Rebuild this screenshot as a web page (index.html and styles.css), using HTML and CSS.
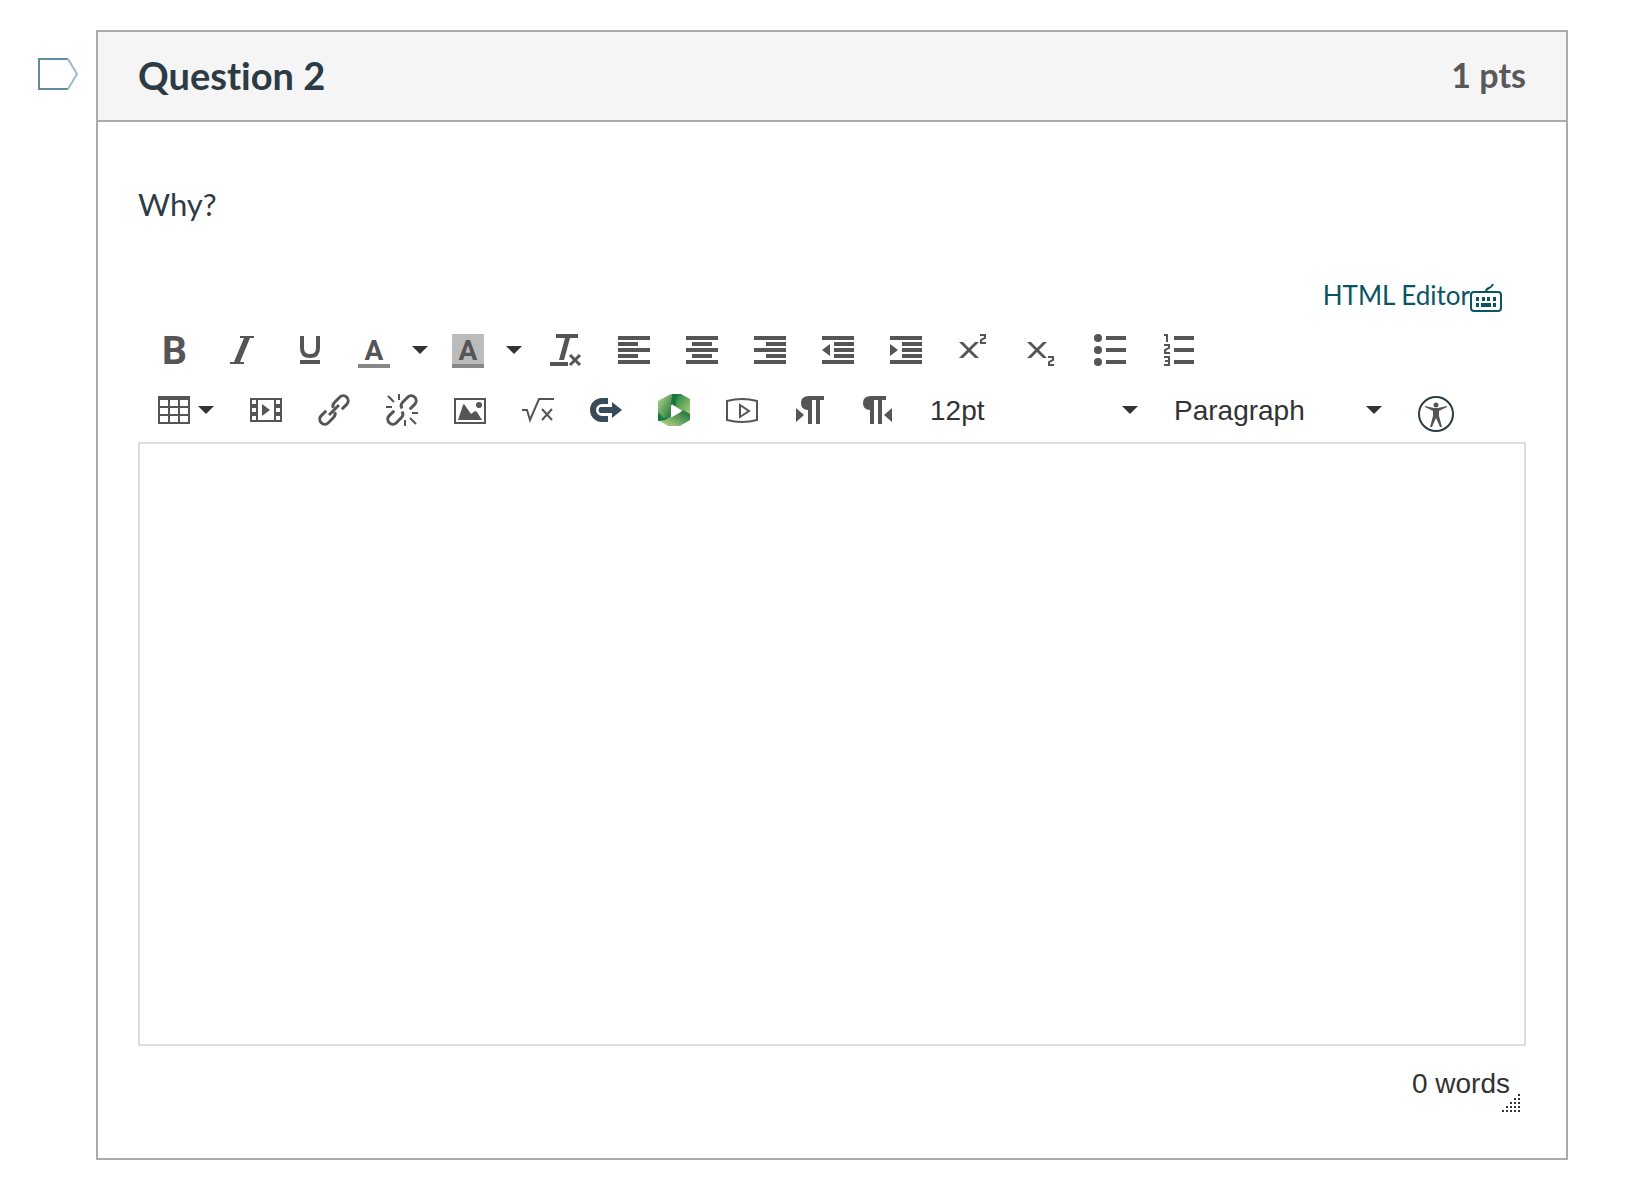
FILE: index.html
```html
<!DOCTYPE html>
<html lang="en">
<head>
<meta charset="utf-8">
<meta name="viewport" content="width=device-width, initial-scale=1">
<title>Quiz: Question 2</title>
<link rel="stylesheet" href="styles.css">
</head>
<body>
<main class="quiz">
  <button class="flag" type="button" aria-label="Flag question">
    <svg viewBox="0 0 40 32"><path class="flag-edge" d="M30 1H1v30h29"/><path class="flag-tip" d="M30 1l9 15-9 15"/></svg>
  </button>
  <section class="question">
    <header class="question-header">
      <h1 class="question-name">Question 2</h1>
      <span class="question-points">1 pts</span>
    </header>
    <div class="question-body">
      <p class="question-text">Why?</p>
      <div class="editor-links">
        <a class="editor-link" href="#html">HTML Editor</a>
        <button class="shortcuts" type="button" aria-label="Keyboard shortcuts">
          <svg viewBox="0 0 32 28"><rect x="1" y="8" width="30" height="19" rx="3" class="line"/><path class="line" d="M16 8q0-3 3-4t4-4"/><path d="M6 13h3v4H6zM12 13h3v4h-3zM17 13h3v4h-3zM23 13h3v4h-3zM6 19h3v4H6zM11 19h10v4H11zM23 19h3v4h-3z"/></svg>
        </button>
      </div>
      <div class="toolbar" role="toolbar" aria-label="Formatting">
        <div class="toolbar-row">
          <button class="tool" type="button" aria-label="Bold"><svg class="icon" viewBox="0 0 32 32"><text class="letter-bold" x="4" y="30">B</text></svg></button>
          <button class="tool" type="button" aria-label="Italic"><svg class="icon" viewBox="0 0 32 32"><path d="M14 2h14v2h-4L14 28h4v2H4v-2h4L18 4h-4z"/></svg></button>
          <button class="tool" type="button" aria-label="Underline"><svg class="icon" viewBox="0 0 32 32"><path class="line w4" d="M8 2v12q0 8 8 8t8-8V2"/><path d="M6 26h20v4H6z"/></svg></button>
          <div class="split">
            <button class="tool tool-main" type="button" aria-label="Text color"><svg class="icon" viewBox="0 0 32 32"><text class="letter" x="16" y="26">A</text><path class="swatch" d="M0 30h32v4H0z"/></svg></button>
            <button class="tool tool-open" type="button" aria-label="Choose text color"><svg class="caret" viewBox="0 0 16 8"><path d="M0 0h16L8 8z"/></svg></button>
          </div>
          <div class="split">
            <button class="tool tool-main" type="button" aria-label="Background color"><svg class="icon" viewBox="0 0 32 32"><path class="shade" d="M0 0h32v30H0z"/><text class="letter" x="16" y="26">A</text><path class="swatch" d="M0 30h32v4H0z"/></svg></button>
            <button class="tool tool-open" type="button" aria-label="Choose background color"><svg class="caret" viewBox="0 0 16 8"><path d="M0 0h16L8 8z"/></svg></button>
          </div>
          <button class="tool" type="button" aria-label="Clear formatting"><svg class="icon" viewBox="0 0 32 32"><path d="M6 0h22v4h-8l-6 22H9l6-22H6zM0 28h18v4H0z"/><path class="line w3" d="M20 21l10 10M30 21L20 31"/></svg></button>
          <button class="tool" type="button" aria-label="Align left"><svg class="icon" viewBox="0 0 32 32"><path d="M0 2h32v4H0zM0 8h20v4H0zM0 14h32v4H0zM0 20h20v4H0zM0 26h32v4H0z"/></svg></button>
          <button class="tool" type="button" aria-label="Align center"><svg class="icon" viewBox="0 0 32 32"><path d="M0 2h32v4H0zM6 8h20v4H6zM0 14h32v4H0zM6 20h20v4H6zM0 26h32v4H0z"/></svg></button>
          <button class="tool" type="button" aria-label="Align right"><svg class="icon" viewBox="0 0 32 32"><path d="M0 2h32v4H0zM12 8h20v4H12zM0 14h32v4H0zM12 20h20v4H12zM0 26h32v4H0z"/></svg></button>
          <button class="tool" type="button" aria-label="Decrease indent"><svg class="icon" viewBox="0 0 32 32"><path d="M0 2h32v4H0zM12 8h20v4H12zM12 14h20v4H12zM12 20h20v4H12zM0 26h32v4H0zM8 10v12L0 16z"/></svg></button>
          <button class="tool" type="button" aria-label="Increase indent"><svg class="icon" viewBox="0 0 32 32"><path d="M0 2h32v4H0zM12 8h20v4H12zM12 14h20v4H12zM12 20h20v4H12zM0 26h32v4H0zM0 10v12l8-6z"/></svg></button>
          <button class="tool" type="button" aria-label="Superscript"><svg class="icon" viewBox="0 0 32 32"><path d="M1 8h4l6 6 6-6h4l-8 8 8 8h-4l-6-6-6 6H1l8-8z"/><path class="line" d="M22 1h5v3l-4 2v3h5"/></svg></button>
          <button class="tool" type="button" aria-label="Subscript"><svg class="icon" viewBox="0 0 32 32"><path d="M1 8h4l6 6 6-6h4l-8 8 8 8h-4l-6-6-6 6H1l8-8z"/><path class="line" d="M22 23h5v3l-4 2v3h5"/></svg></button>
          <button class="tool" type="button" aria-label="Bulleted list"><svg class="icon" viewBox="0 0 32 32"><circle cx="4" cy="4" r="4"/><circle cx="4" cy="16" r="4"/><circle cx="4" cy="28" r="4"/><path d="M12 2h20v4H12zM12 14h20v4H12zM12 26h20v4H12z"/></svg></button>
          <button class="tool" type="button" aria-label="Numbered list"><svg class="icon" viewBox="0 0 32 32"><path class="line" d="M2 1h3v7M2 11h5v3l-4 2v3h5M2 23h5v8H2M3 27h4"/><path d="M12 2h20v4H12zM12 14h20v4H12zM12 26h20v4H12z"/></svg></button>
        </div>
        <div class="toolbar-row">
          <button class="tool tool-menu" type="button" aria-label="Table"><svg class="icon" viewBox="0 0 32 32"><path fill-rule="evenodd" d="M0 2h32v28H0zM2 6h8v6H2zM12 6h8v6h-8zM22 6h8v6h-8zM2 14h8v6H2zM12 14h8v6h-8zM22 14h8v6h-8zM2 22h8v6H2zM12 22h8v6h-8zM22 22h8v6h-8z"/></svg><svg class="caret" viewBox="0 0 16 8"><path d="M0 0h16L8 8z"/></svg></button>
          <button class="tool" type="button" aria-label="Media"><svg class="icon" viewBox="0 0 32 32"><path fill-rule="evenodd" d="M0 4h32v24H0zM2 6h4v4H2zM2 14h4v4H2zM2 22h4v4H2zM26 6h4v4h-4zM26 14h4v4h-4zM26 22h4v4h-4zM8 6h16v20H8z"/><path d="M12 10l8 6-8 6z"/></svg></button>
          <button class="tool" type="button" aria-label="Link"><svg class="icon" viewBox="0 0 32 32"><g class="line w3" transform="rotate(-45 16 16)"><path d="M22 21h7a5 5 0 0 0 5-5a5 5 0 0 0-5-5h-7q-4 0-5 3M10 11H3a5 5 0 0 0-5 5a5 5 0 0 0 5 5h7q4 0 5-3M9 16h14"/></g></svg></button>
          <button class="tool" type="button" aria-label="Remove link"><svg class="icon" viewBox="0 0 32 32"><g class="line w3" transform="rotate(-45 16 16)"><path d="M22 21h7a5 5 0 0 0 5-5a5 5 0 0 0-5-5h-7q-4 0-5 4M10 11H3a5 5 0 0 0-5 5a5 5 0 0 0 5 5h7q4 0 5-4"/></g><path class="line" d="M2 2l6 6M13 0v6M0 13h6M26 19h6M24 24l6 6M19 26v6"/></svg></button>
          <button class="tool" type="button" aria-label="Image"><svg class="icon" viewBox="0 0 32 32"><path class="line" d="M1 5h30v24H1z"/><path d="M4 26l5-15 1-1 7 10 4-3 2 1 5 8z"/><circle cx="25" cy="11" r="3"/></svg></button>
          <button class="tool" type="button" aria-label="Math equation"><svg class="icon" viewBox="0 0 32 32"><path class="line" d="M0 16h5l3 10 9-21h15M20 15l10 11M30 15L20 26"/></svg></button>
          <button class="tool" type="button" aria-label="Commons"><svg class="icon navy" viewBox="0 0 32 32"><path class="line w6" d="M18 7h-6a9 9 0 0 0 0 18h6"/><path d="M10 13h12V8l10 8-10 8v-5H10q-3-3 0-6z"/></svg></button>
          <button class="tool" type="button" aria-label="Panopto recorder"><svg class="icon" viewBox="0 0 32 32">
            <defs>
              <linearGradient id="leaf-a" x1="0" y1="0" x2="1" y2="1"><stop offset="0" stop-color="#b9d98a"/><stop offset="1" stop-color="#0f6b35"/></linearGradient>
              <linearGradient id="leaf-b" x1="0" y1="0" x2="1" y2="1"><stop offset="0" stop-color="#0f7a3c"/><stop offset="1" stop-color="#b5d27d"/></linearGradient>
              <linearGradient id="leaf-c" x1="0" y1="1" x2="1" y2="0"><stop offset="0" stop-color="#c4de8c"/><stop offset="1" stop-color="#116b36"/></linearGradient>
            </defs>
            <path fill="url(#leaf-b)" d="M15 0h8l9 5v17l-9-6-8-5z"/>
            <path fill="url(#leaf-a)" d="M0 7l13-7 2 1-2 22-9 3-4-3z"/>
            <path fill="url(#leaf-c)" d="M0 26q8 0 14-3 8-4 11-7l7 4v6l-10 6H10z"/>
            <path fill="#16783f" d="M14 0h7q-4 4-3 12l-5-2zM0 18l5 6 8-1-6 3-7 1z"/>
            <path fill="#fff" d="M13 11l10 6-10 6z"/></svg></button>
          <button class="tool" type="button" aria-label="Record media"><svg class="icon" viewBox="0 0 32 32"><path class="line" d="M1 7Q16 3 31 7v19q-15 4-30 0zM14 11l9 6-9 6z"/></svg></button>
          <button class="tool" type="button" aria-label="Left to right"><svg class="icon" viewBox="0 0 32 32"><path d="M30 2v4h-4v24h-4V6h-4v24h-4V16q-7 0-7-7t8-7zM2 14l8 7-8 7z"/></svg></button>
          <button class="tool" type="button" aria-label="Right to left"><svg class="icon" viewBox="0 0 32 32"><path d="M24 2v4h-4v24h-4V6h-4v24H8V16q-7 0-7-7t8-7zM30 14l-8 7 8 7z"/></svg></button>
          <div class="picker">
            <select class="picker-field" aria-label="Font size"><option>12pt</option><option>14pt</option></select>
            <svg class="caret" viewBox="0 0 16 8"><path d="M0 0h16L8 8z"/></svg>
          </div>
          <div class="picker">
            <select class="picker-field" aria-label="Text style"><option>Paragraph</option><option>Header 2</option></select>
            <svg class="caret" viewBox="0 0 16 8"><path d="M0 0h16L8 8z"/></svg>
          </div>
          <button class="tool checker" type="button" aria-label="Check accessibility"><svg class="icon-large" viewBox="0 0 36 36"><circle class="line ring" cx="18" cy="18" r="17"/><circle cx="18" cy="9" r="2.5"/><path d="M7 10l9 2h4l9-2v1l-8 4v5l3 11h-2l-4-9-4 9h-2l3-11v-5l-8-4z"/></svg></button>
        </div>
      </div>
      <textarea class="answer" aria-label="Answer"></textarea>
      <div class="status">
        <span>0 words</span>
        <svg class="grip" viewBox="0 0 18 18"><path d="M16 0h2v2h-2zM12 4h2v2h-2zM16 4h2v2h-2zM8 8h2v2H8zM12 8h2v2h-2zM16 8h2v2h-2zM4 12h2v2H4zM8 12h2v2H8zM12 12h2v2h-2zM16 12h2v2h-2zM0 16h2v2H0zM4 16h2v2H4zM8 16h2v2H8zM12 16h2v2h-2zM16 16h2v2h-2z"/></svg>
      </div>
    </div>
  </section>
</main>
</body>
</html>
```
FILE: styles.css
```css
* {
  box-sizing: border-box;
}

body {
  margin: 0;
  background: #fff;
  color: #2d3b45;
  font-family: Lato, sans-serif;
  font-variant-ligatures: none;
}

button {
  padding: 0;
  border: 0;
  background: none;
  color: inherit;
  cursor: pointer;
}

svg {
  display: block;
  fill: currentColor;
  overflow: visible;
}

.line {
  fill: none;
  stroke: currentColor;
  stroke-width: 2;
}

.w3 { stroke-width: 3; }
.w4 { stroke-width: 4; }
.w6 { stroke-width: 6; }

.quiz {
  display: flex;
  align-items: flex-start;
  gap: 18px;
  padding: 30px 68px 44px 38px;
}

.flag {
  flex: none;
  width: 40px;
  margin-top: 28px;
}

.flag path {
  fill: none;
  stroke-width: 2;
}

.flag-edge { stroke: #5f8ba5; }
.flag-tip { stroke: #9dbaca; }

.question {
  flex: 1;
  min-width: 0;
  border: 2px solid #aaa;
}

.question-header {
  display: flex;
  align-items: center;
  justify-content: space-between;
  height: 90px;
  padding: 0 40px 2px;
  border-bottom: 2px solid #aaa;
  background: #f5f5f5;
}

.question-name {
  margin: 0;
  font-size: 38px;
  line-height: 48px;
}

.question-points {
  color: #595959;
  font-size: 34px;
  font-weight: bold;
  line-height: 48px;
}

.question-body {
  padding: 58px 40px 46px;
}

.question-text {
  margin: 0 0 48px;
  font-size: 31px;
  line-height: 48px;
}

.editor-links {
  display: flex;
  align-items: flex-start;
  justify-content: flex-end;
  height: 44px;
  padding-right: 24px;
  color: #0b5563;
}

.editor-link {
  color: inherit;
  font-size: 26px;
  line-height: 38px;
  text-decoration: none;
}

.shortcuts {
  width: 32px;
  margin-top: 8px;
}

.toolbar {
  padding: 0 2px 2px;
  color: #555;
}

.toolbar-row {
  display: flex;
  align-items: center;
  min-height: 60px;
}

.tool {
  flex: none;
  padding: 14px 18px;
}

.split,
.tool-menu {
  display: flex;
  align-items: center;
}

.tool-menu { gap: 8px; }
.tool-main { padding: 14px; }
.tool-open { padding: 14px 10px 14px 8px; }

.icon {
  width: 32px;
  height: 32px;
}

.icon-large {
  width: 36px;
  height: 36px;
}

.letter-bold,
.letter {
  font-family: Roboto, sans-serif;
  font-weight: bold;
}

.letter-bold { font-size: 39px; }

.letter {
  font-size: 28px;
  text-anchor: middle;
}

.swatch { fill: #888; }
.shade { fill: #bbb; }
.navy { color: #394b58; }
.ring { color: #2d3b45; }

.caret {
  flex: none;
  width: 16px;
  height: 8px;
  color: #333;
}

.picker {
  display: grid;
  flex: none;
  align-items: center;
  width: 244px;
}

.picker > * {
  grid-area: 1 / 1;
}

.picker .caret {
  justify-self: end;
  margin-right: 18px;
  pointer-events: none;
}

.picker-field {
  width: 100%;
  height: 60px;
  padding: 0 18px;
  border: 0;
  background: none;
  appearance: none;
  color: #333;
  font: 28px "Liberation Sans", sans-serif;
}

.checker {
  align-self: flex-end;
  padding: 8px 18px;
}

.answer {
  display: block;
  width: 100%;
  height: 604px;
  padding: 16px;
  border: 2px solid #ddd;
  resize: none;
  font: 31px/48px Lato, sans-serif;
}

.status {
  display: flex;
  align-items: flex-end;
  justify-content: flex-end;
  height: 66px;
  padding-right: 6px;
  color: #333;
  font: 28px/56px "Liberation Sans", sans-serif;
}

.grip {
  width: 18px;
  height: 18px;
  margin-left: -8px;
}
```
